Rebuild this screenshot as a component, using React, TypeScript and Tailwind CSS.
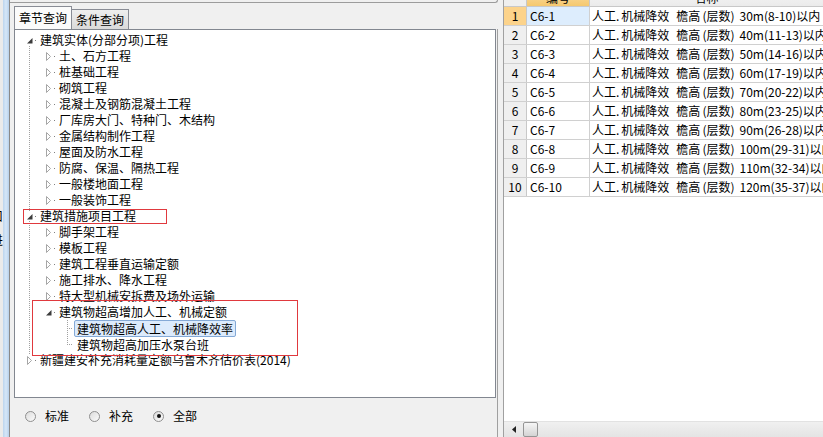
import clsx from "clsx";

type TreeNode = {
  label: string;
  level: 0 | 1 | 2;
  state: "open" | "closed" | "leaf";
  selected?: boolean;
};

const treeData: TreeNode[] = [
  { label: "建筑实体(分部分项)工程", level: 0, state: "open" },
  { label: "土、石方工程", level: 1, state: "closed" },
  { label: "桩基础工程", level: 1, state: "closed" },
  { label: "砌筑工程", level: 1, state: "closed" },
  { label: "混凝土及钢筋混凝土工程", level: 1, state: "closed" },
  { label: "厂库房大门、特种门、木结构", level: 1, state: "closed" },
  { label: "金属结构制作工程", level: 1, state: "closed" },
  { label: "屋面及防水工程", level: 1, state: "closed" },
  { label: "防腐、保温、隔热工程", level: 1, state: "closed" },
  { label: "一般楼地面工程", level: 1, state: "closed" },
  { label: "一般装饰工程", level: 1, state: "closed" },
  { label: "建筑措施项目工程", level: 0, state: "open" },
  { label: "脚手架工程", level: 1, state: "closed" },
  { label: "模板工程", level: 1, state: "closed" },
  { label: "建筑工程垂直运输定额", level: 1, state: "closed" },
  { label: "施工排水、降水工程", level: 1, state: "closed" },
  { label: "特大型机械安拆费及场外运输", level: 1, state: "closed" },
  { label: "建筑物超高增加人工、机械定额", level: 1, state: "open" },
  { label: "建筑物超高人工、机械降效率", level: 2, state: "leaf", selected: true },
  { label: "建筑物超高加压水泵台班", level: 2, state: "leaf" },
  { label: "新疆建安补充消耗量定额乌鲁木齐估价表(2014)", level: 0, state: "closed" },
];

const heights = [
  "30m(8-10)",
  "40m(11-13)",
  "50m(14-16)",
  "60m(17-19)",
  "70m(20-22)",
  "80m(23-25)",
  "90m(26-28)",
  "100m(29-31)",
  "110m(32-34)",
  "120m(35-37)",
];

function Expander({ state }: { state: "open" | "closed" | "leaf" }) {
  if (state === "open") {
    return (
      <svg width="7" height="9" viewBox="0 0 7 9">
        <path d="M6.5 2 L6.5 7.5 L1 7.5 Z" fill="#3c3c3c" />
      </svg>
    );
  }
  return (
    <svg width="7" height="9" viewBox="0 0 7 9">
      <path d="M1.5 0.5 L5.5 4.5 L1.5 8.5 Z" fill="#fff" stroke="#a6a6a6" />
    </svg>
  );
}

function TreeRow({ node }: { node: TreeNode }) {
  if (node.level === 2) {
    return (
      <div className="flex h-4 items-center pl-[59px]">
        <span
          className={clsx(
            "h-[17px] whitespace-nowrap rounded-[2px] border px-[2px] leading-[15px]",
            node.selected ? "border-[#84a9d6] bg-[#dcebfc]" : "border-transparent"
          )}
        >
          {node.label}
        </span>
      </div>
    );
  }
  return (
    <div className={clsx("flex h-4 items-center", node.level === 0 ? "pl-[11px]" : "pl-[30px]")}>
      <span className="relative flex w-[7px] justify-center bg-white">
        <Expander state={node.state} />
      </span>
      <span className="ml-[2px] h-px w-px bg-[#808080]" />
      <span className="ml-[4px] whitespace-nowrap leading-4">{node.label}</span>
    </div>
  );
}

function Radio({ label, checked }: { label: string; checked?: boolean }) {
  return (
    <div className="flex w-[64px] items-center">
      <span className="flex h-[11px] w-[11px] items-center justify-center rounded-full border border-[#8f8f8f] bg-linear-to-br from-[#dcdcdc] to-[#fbfbfb]">
        {checked && <span className="h-[4px] w-[4px] rounded-full bg-[#111]" />}
      </span>
      <span className="ml-[9px]">{label}</span>
    </div>
  );
}

export default function App() {
  return (
    <div className="flex h-[437px] w-[823px] overflow-hidden bg-[#f0f0f0] font-['Noto_Sans_CJK_SC',sans-serif] text-[12px] text-black">
      {/* window edge on the far left */}
      <div className="flex w-[10px] shrink-0">
        <div className="flex w-[3px] flex-col overflow-hidden bg-[#ebebeb] pt-[209px]">
          <div className="-ml-[9px] h-[14px] w-[12px] leading-[14px]">口</div>
          <div className="-ml-[9px] mt-[10px] h-[14px] w-[12px] leading-[14px]">进</div>
        </div>
        <div className="w-[6px] bg-linear-to-r from-[#bcd5ee] via-[#d6e7f8] to-[#b7d1ec]" />
        <div className="w-px bg-[#8a8a8a]" />
      </div>

      {/* left pane */}
      <div className="flex w-[488px] shrink-0 flex-col">
        <div className="h-[3px] shrink-0 rounded-br-[3px] border-b border-r border-[#9c9c9c]" />
        <div className="flex h-[26px] shrink-0 items-end pl-[4px]">
          <div className="flex h-[23px] w-[58px] items-center justify-center border border-b-0 border-[#898c95] bg-[#fbfbfb] pb-[1px]">
            章节查询
          </div>
          <div className="flex h-[20px] w-[57px] items-center justify-center border border-b-0 border-l-0 border-[#898c95] bg-linear-to-b from-[#eeeeee] to-[#dadada]">
            条件查询
          </div>
        </div>
        <div className="flex flex-1 flex-col border-r border-[#a0a0a0]">
          <div className="relative ml-[4px] h-[369px] w-[482px] border border-[#828790] bg-white pt-[2px]">
            <svg className="pointer-events-none absolute left-0 top-0" width="480" height="367">
              <g stroke="#a0a0a0" strokeDasharray="1 1">
                <line x1="14.5" y1="14" x2="14.5" y2="181" />
                <line x1="14.5" y1="191" x2="14.5" y2="325" />
                <line x1="52.5" y1="290" x2="52.5" y2="314" />
                <line x1="52" y1="298.5" x2="58" y2="298.5" />
                <line x1="52" y1="314.5" x2="58" y2="314.5" />
              </g>
            </svg>
            {treeData.map((n) => (
              <TreeRow key={n.label} node={n} />
            ))}
            {/* red annotation boxes */}
            <div className="absolute left-[8px] top-[179px] h-[15px] w-[144px] border border-[#e0393e]" />
            <div className="absolute left-[17px] top-[270px] h-[56px] w-[266px] border border-[#e0393e]" />
          </div>
          <div className="flex flex-1 items-center pb-[3px] pl-[15px]">
            <Radio label="标准" />
            <Radio label="补充" />
            <Radio label="全部" checked />
          </div>
        </div>
      </div>

      {/* splitter */}
      <div className="w-[5px] shrink-0" />

      {/* right pane: grid */}
      <div className="flex w-[320px] shrink-0 flex-col border-l border-[#a0a0a0]">
        <div className="flex flex-1 flex-col overflow-hidden bg-white">
          <div className="-mt-[13px] flex h-[20px] shrink-0 border-b border-[#c8c8c8]">
            <div className="w-[23px] shrink-0 border-r border-[#c8c8c8] bg-[#efefef]" />
            <div className="flex w-[63px] shrink-0 items-center justify-center border-r border-[#c8c8c8] bg-linear-to-b from-[#fbe2ad] to-[#f5c86e] pt-[3px]">
              编号
            </div>
            <div className="flex flex-1 items-center justify-center bg-linear-to-b from-[#f7f7f7] to-[#ebebeb] pt-[3px]">
              名称
            </div>
          </div>
          {heights.map((h, i) => (
            <div key={h} className="flex h-[19px] shrink-0 border-b border-[#d0d0d0]">
              <div
                className={clsx(
                  "flex w-[23px] shrink-0 items-center justify-center border-r border-[#c8c8c8]",
                  i === 0 ? "bg-[#fcd38b]" : "bg-[#efefef]"
                )}
              >
                {i + 1}
              </div>
              <div
                className={clsx(
                  "flex w-[63px] shrink-0 items-center border-r border-[#d0d0d0] pl-[3px]",
                  i === 0 && "bg-[#ddedfd]"
                )}
              >
                C6-{i + 1}
              </div>
              <div className="flex flex-1 items-center overflow-hidden whitespace-nowrap pl-[2px]">
                <span>人工.</span>
                <span className="ml-[2px]">机械降效</span>
                <span className="ml-[7px]">檐高</span>
                <span className="px-[2px]">(层数)</span>
                <span className="ml-[3px]">{h}以内</span>
              </div>
            </div>
          ))}
        </div>
        <div className="flex h-[16px] shrink-0 items-center border-t border-[#e2e2e2] bg-linear-to-b from-[#f0f0f0] to-[#e4e4e4] pl-[8px]">
          <svg width="4" height="7" viewBox="0 0 4 7">
            <path d="M4 0 L0 3.5 L4 7 Z" fill="#222" />
          </svg>
          <div className="ml-[7px] h-[15px] w-[15px] rounded-[2px] border border-[#959595] bg-linear-to-b from-[#f6f6f6] to-[#d4d4d4]" />
        </div>
      </div>
    </div>
  );
}
